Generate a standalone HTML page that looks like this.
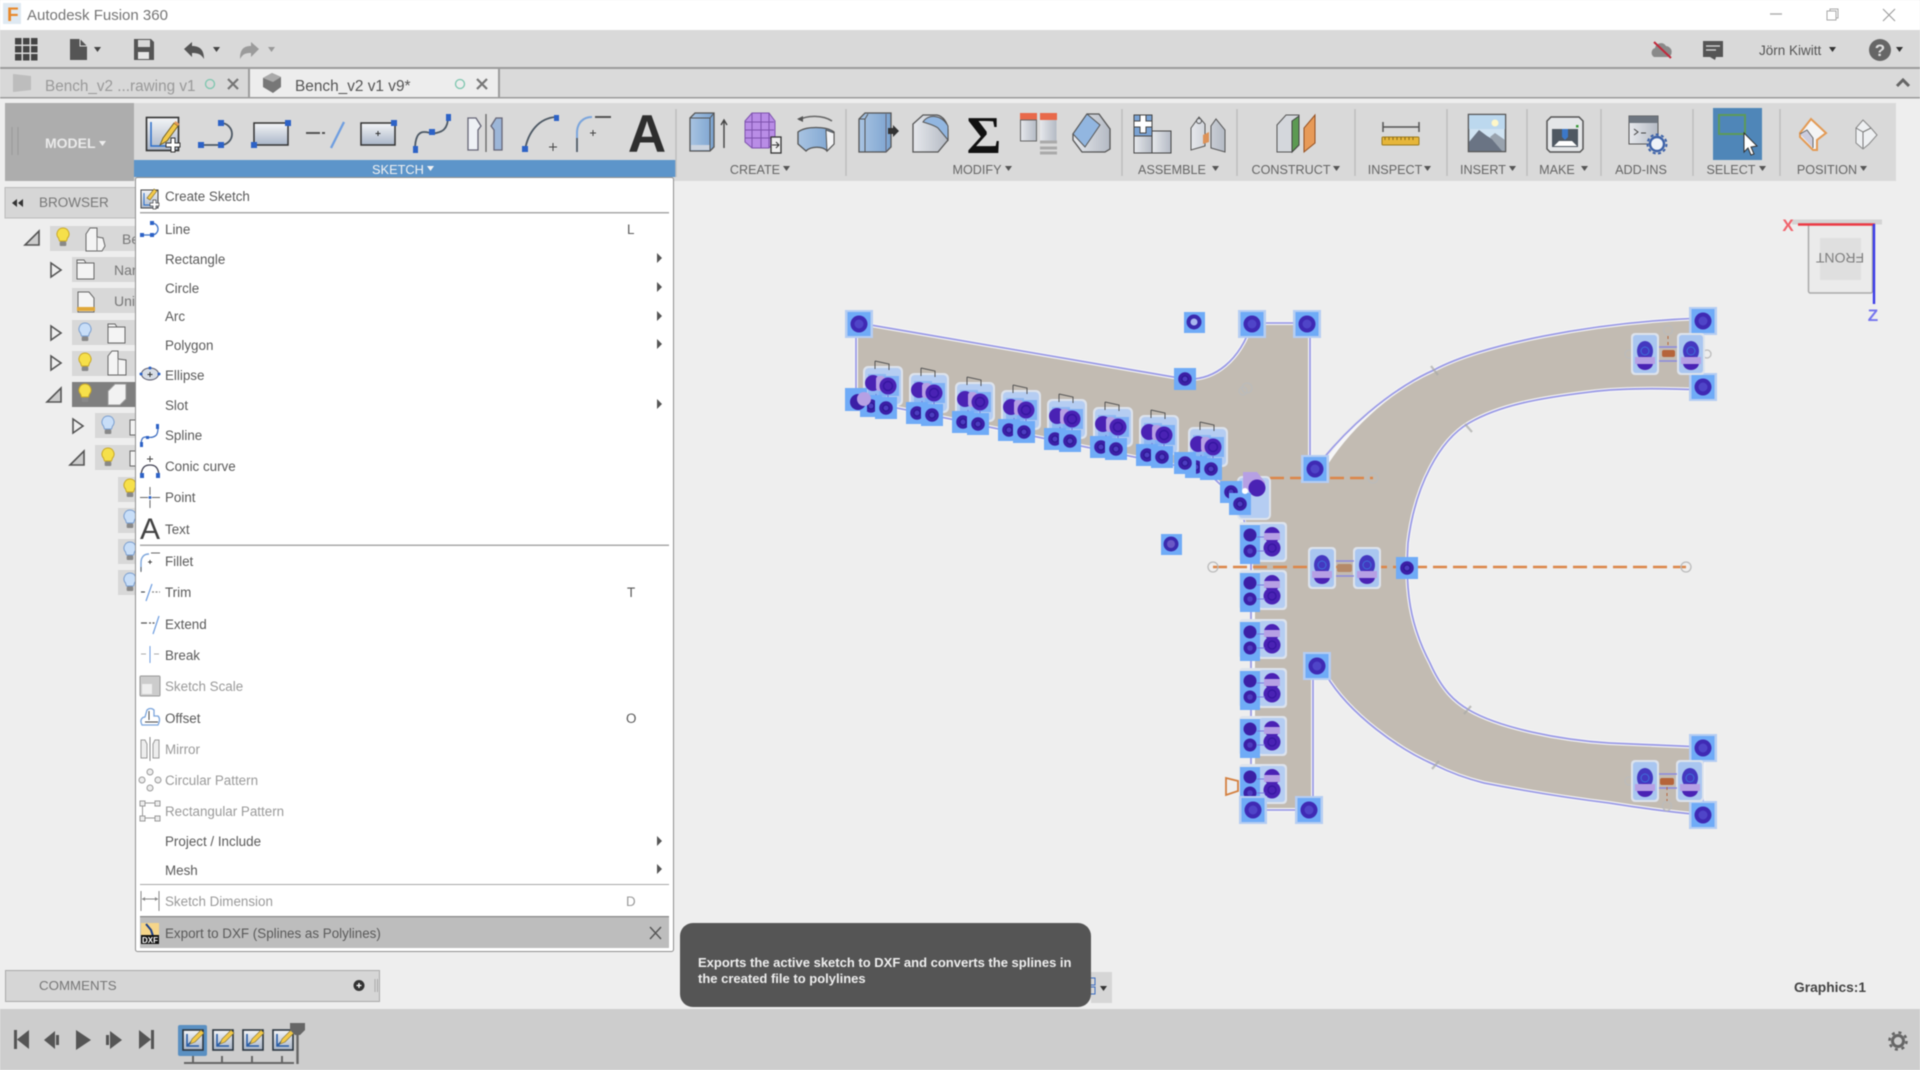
<!DOCTYPE html>
<html><head><meta charset="utf-8"><title>Autodesk Fusion 360</title>
<style>
html,body{margin:0;padding:0;width:1920px;height:1070px;overflow:hidden;background:#eee}
svg{display:block;filter:blur(.55px)}
text{font-family:"Liberation Sans",Arial,sans-serif}
.m{font-size:13.4px;fill:#5a5a5a}
.d{font-size:13.4px;fill:#9a9a9a}
.l{font-size:12.6px;fill:#666}
.ar{fill:#555}
</style></head><body>
<svg width="1920" height="1070" viewBox="0 0 1920 1070" xmlns="http://www.w3.org/2000/svg">
<defs>
<linearGradient id="gp" x1="0" y1="0" x2="0" y2="1"><stop offset="0" stop-color="#f4f5f7"/><stop offset="1" stop-color="#aab6c8"/></linearGradient>
<linearGradient id="gb" x1="0" y1="0" x2="1" y2="0"><stop offset="0" stop-color="#a9c4e2"/><stop offset="1" stop-color="#7ba3d0"/></linearGradient>
<linearGradient id="gs" x1="0" y1="0" x2="1" y2="0"><stop offset="0" stop-color="#e6e8ec"/><stop offset="1" stop-color="#b4bac4"/></linearGradient>
<g id="sq"><rect x="-11" y="-11" width="22" height="22" fill="#6fabf7"/><circle r="6.800" fill="#3b1fa6"/><circle r="3" fill="#4d3dc0" stroke="#2a1790" stroke-width="1"/></g>
<g id="cn"><rect x="-14" y="-14" width="28" height="28" fill="#b5cdf2"/><rect x="-11.500" y="-12" width="23" height="24" fill="#6fabf7"/><circle r="8.500" fill="#3f2ab4"/><circle r="4.500" fill="#4f45c8"/></g>
<g id="g1">
<rect x="-25" y="-20" width="40" height="40" rx="5" fill="#dde3ec"/>
<rect x="-23" y="-18" width="36" height="36" rx="4" fill="#b5cdf2"/>
<rect x="-20" y="-12" width="18" height="24" fill="#8fb8f2"/>
<rect x="-9" y="-10" width="20" height="20" fill="#7fb0f4"/>
<path d="M-13-25l14 3v6M-13-25v8" fill="none" stroke="#555" stroke-width="1"/>
<circle cx="-15" cy="-3" r="8" fill="#4a22b4"/>
<rect x="-12" y="-10" width="9" height="15" rx="3" fill="#b6a0e4"/>
<circle r="8.500" fill="#4a22b4"/><circle r="4.500" fill="none" stroke="#3516a0" stroke-width="1.400"/>
<path d="M-12 8v12M0 8v14" stroke="#6f6fd8" stroke-width="1"/>
<use href="#sq" x="-17" y="20"/><use href="#sq" x="-2" y="22"/>
</g>
<g id="g2">
<rect x="-11" y="-14" width="48" height="40" rx="4" fill="#dde3ec"/>
<rect x="9" y="-12" width="26" height="36" rx="3" fill="#b5cdf2"/>
<rect x="-10" y="-11" width="20" height="19" fill="#6fabf7"/><rect x="-10" y="6" width="20" height="22" fill="#6fabf7"/>
<circle cy="-1" r="6.500" fill="#3b1fa6"/><circle cy="15" r="6.500" fill="#3b1fa6"/><circle cy="15" r="2.800" fill="#4d3dc0"/>
<circle cx="22" cy="-1" r="8" fill="#4a22b4"/><circle cx="22" cy="12" r="8.500" fill="#4a22b4"/><rect x="14" y="-3" width="16" height="7" fill="#b6a0e4"/><circle cx="22" cy="12" r="4" fill="none" stroke="#3516a0" stroke-width="1.200"/>
<path d="M7 1H14M7 15h8" stroke="#7a7ae0"/>
</g>
<g id="g3">
<rect x="-14" y="-21" width="28" height="42" rx="4" fill="#dde3ec"/>
<rect x="-12" y="-19" width="24" height="38" rx="3" fill="#a9c6f0"/>
<ellipse cy="-3" rx="8" ry="10" fill="#4438c0"/><ellipse cy="9" rx="8" ry="7" fill="#4a22b4"/><rect x="-10" y="3" width="20" height="7" fill="#b6a0e4"/><circle cy="-3" r="4" fill="none" stroke="#3f6fd8"/>
</g>
<g id="bulby"><path d="M0-10a6 6 0 0 1 4.500 10l-1 3h-7l-1-3A6 6 0 0 1 0-10z" fill="#f6e04a" stroke="#c9a828"/><rect x="-3.300" y="3.500" width="6.600" height="4.500" rx="1" fill="#888"/></g>
<g id="bulbb"><path d="M0-10a6 6 0 0 1 4.500 10l-1 3h-7l-1-3A6 6 0 0 1 0-10z" fill="#c8def8" stroke="#7b9fd0"/><rect x="-3.300" y="3.500" width="6.600" height="4.500" rx="1" fill="#888"/></g>
<path id="tc" d="M0-7l10 7-10 7z" fill="none" stroke="#555" stroke-width="1.600"/>
<path id="te" d="M12-7v14H-2z" fill="#ccc" stroke="#555" stroke-width="1.600"/>
<path id="sa" d="M0-5l5 5-5 5z" fill="#555"/>
<path id="da" d="M0 0h7l-3.500 5z"/>
<g id="pen"><path d="M0 15L3 8 14-7l4 3L7 11z" fill="#f2c94a" stroke="#6a5a20" stroke-width=".9"/><path d="M14-7l4 3 1.500-2-4-3z" fill="#e59a5a"/></g>
<g id="tl"><rect width="20" height="20" fill="url(#gp)" stroke="#2c3640" stroke-width="1.600"/><path d="M4 4v12h12M4 16l8-8" fill="none" stroke="#2a5ea8" stroke-width="1.600"/><path d="M7 14l2-5 9-9 3 3-9 9z" fill="#f2c94a" stroke="#7a6a30" stroke-width=".6"/></g>
</defs>

<rect width="1920" height="1070" fill="#eeeeee"/>
<!-- title bar -->
<rect width="1920" height="30" fill="#fff"/>
<rect x="3" y="3" width="18" height="21" fill="#dfe9f2"/>
<text x="7" y="21" font-size="19" font-weight="bold" fill="#e8892c">F</text>
<text x="27" y="20" font-size="15" fill="#757575">Autodesk Fusion 360</text>
<path d="M1770 14h12" stroke="#b0b0b0" stroke-width="1.500"/>
<rect x="1830" y="9" width="8" height="9" fill="#fff" stroke="#a8a8a8"/><rect x="1827" y="11" width="9" height="9" fill="#fff" stroke="#a8a8a8"/>
<path d="M1883 9l12 12M1895 9l-12 12" stroke="#999" stroke-width="1"/>

<!-- quick bar -->
<rect y="30" width="1920" height="37" fill="#d9d9d9"/>
<rect y="67" width="1920" height="2" fill="#9c9c9c"/>
<g fill="#444"><rect x="15" y="38" width="6.500" height="6.500"/><rect x="23" y="38" width="6.500" height="6.500"/><rect x="31" y="38" width="6.500" height="6.500"/><rect x="15" y="46" width="6.500" height="6.500"/><rect x="23" y="46" width="6.500" height="6.500"/><rect x="31" y="46" width="6.500" height="6.500"/><rect x="15" y="54" width="6.500" height="6.500"/><rect x="23" y="54" width="6.500" height="6.500"/><rect x="31" y="54" width="6.500" height="6.500"/></g>
<path d="M70 39h10l7 7v14H70z" fill="#555"/><path d="M80 39v7h7" fill="none" stroke="#ddd"/>
<use href="#da" x="94" y="47" fill="#444"/>
<path d="M134 39h17l3 3v18h-20z" fill="#555"/><rect x="138" y="40" width="12" height="7" fill="#d9d9d9"/><rect x="138" y="52" width="11" height="7" fill="#e6e6e6"/>
<path d="M184 49l8-7v4c7 0 12 3 12 13-3-5-6-6-12-6v4z" fill="#555"/><use href="#da" x="213" y="47" fill="#444"/>
<path d="M259 49l-8-7v4c-7 0-11 3-11 13 3-5 5-6 11-6v4z" fill="#9b9b9b"/><use href="#da" x="268" y="47" fill="#999"/>
<path d="M1654 57a5 5 0 0 1 1-9 6 6 0 0 1 11-2 6 6 0 0 1 3 11z" fill="#8a8a8a"/><path d="M1654 42l17 16" stroke="#c2283a" stroke-width="2"/>
<path d="M1703 41h20v16h-7l-1 3-5-3h-7z" fill="#555"/><path d="M1706 46h14M1706 50h10" stroke="#ddd" stroke-width="1.200"/>
<text x="1759" y="55" font-size="13.500" fill="#555">Jörn Kiwitt</text><use href="#da" x="1829" y="47" fill="#333"/>
<circle cx="1880" cy="50" r="11" fill="#666"/><text x="1880" y="56" text-anchor="middle" font-size="17" font-weight="bold" fill="#ddd">?</text><use href="#da" x="1896" y="47" fill="#333"/>

<!-- tabs -->
<rect y="69" width="1920" height="28" fill="#dadada"/>
<rect y="97" width="1920" height="1.500" fill="#9c9c9c"/>
<rect x="0" y="69" width="248" height="28" fill="#d8d8d8"/>
<rect x="248" y="69" width="2" height="28" fill="#9c9c9c"/>
<rect x="250" y="69" width="248" height="28" fill="#ededed"/>
<rect x="498" y="69" width="2" height="28" fill="#9c9c9c"/>
<path d="M13 74l18 2v14l-18 2z" fill="#bdbdbd"/>
<text x="45" y="91" font-size="15.300" fill="#999">Bench_v2 ...rawing v1</text>
<circle cx="210" cy="84" r="4.500" fill="none" stroke="#7cc6ae" stroke-width="1.300"/>
<path d="M228 79l10 10M238 79l-10 10" stroke="#777" stroke-width="2.200"/>
<path d="M263 78l9-5 9 4v10l-8 6-10-6z" fill="#777"/><path d="M263 78l10 4 8-5-9-4z" fill="#aaa"/>
<text x="295" y="91" font-size="15.400" fill="#555">Bench_v2 v1 v9*</text>
<circle cx="460" cy="84" r="4.500" fill="none" stroke="#7cc6ae" stroke-width="1.300"/>
<path d="M477 79l10 10M487 79l-10 10" stroke="#777" stroke-width="2.200"/>
<path d="M1897 86l6-6 6 6" fill="none" stroke="#666" stroke-width="3"/>

<!-- toolbar -->
<rect x="5" y="103" width="1891" height="78" fill="#d9d9d9"/>
<rect x="5" y="103" width="129" height="78" fill="#adadad"/>
<path d="M12 127v28M18 127v28" stroke="#999"/>
<text x="45" y="148" font-size="14" font-weight="bold" fill="#eaeaea">MODEL</text><use href="#da" x="99" y="141" fill="#eee"/>
<rect x="134" y="160" width="542" height="17" fill="#5d95ca"/>
<text x="372" y="174" font-size="12.800" fill="#f2f2f2">SKETCH</text><use href="#da" x="427" y="166" fill="#f2f2f2"/>
<!-- sketch icons -->
<rect x="146.500" y="117.500" width="32" height="33" fill="url(#gp)" stroke="#333" stroke-width="1.600"/>
<path d="M151 122v24h22" fill="none" stroke="#2c6fcb" stroke-width="1.500"/>
<use href="#pen" x="160" y="130"/>
<path d="M171 138h4v5h5v4h-5v5h-4v-5h-5v-4h5z" fill="#fff" stroke="#333"/>
<path d="M201 145h20M221 123a11 11 0 0 1 0 22" fill="none" stroke="#4c5864" stroke-width="1.800"/>
<rect x="198" y="142" width="6" height="6" fill="#2d62c6"/><rect x="218" y="142" width="6" height="6" fill="#2d62c6"/><rect x="218" y="120" width="6" height="6" fill="#2d62c6"/>
<rect x="254" y="123" width="34" height="22" fill="url(#gp)" stroke="#333" stroke-width="1.500"/><rect x="285" y="120" width="6" height="6" fill="#2d62c6"/><rect x="251" y="142" width="6" height="6" fill="#2d62c6"/>
<path d="M306 133h14M322 133h3" stroke="#555" stroke-width="2"/><path d="M331 148l13-26" stroke="#6f9ee0" stroke-width="2.300"/>
<rect x="361" y="123" width="34" height="22" fill="url(#gp)" stroke="#333" stroke-width="1.500"/><rect x="391" y="120" width="6" height="6" fill="#2d62c6"/><path d="M378 131v5M375.500 133.500h5" stroke="#333"/>
<path d="M415 150c0-14 4-18 9-18s8 2 12 1 12-2 12-16" fill="none" stroke="#4c5864" stroke-width="1.800"/><rect x="413" y="146" width="5" height="7" fill="#2d62c6"/><rect x="429" y="129" width="6" height="6" fill="#2d62c6"/><rect x="446" y="114" width="5" height="7" fill="#2d62c6"/>
<path d="M468 118h8l5 8-3 4v20h-10z" fill="#eef1f5" stroke="#667" stroke-width="1.300"/><path d="M502 118h-6l-5 8 3 4v20h8z" fill="#9cb6d8" stroke="#667" stroke-width="1.300"/><path d="M486 114v38" stroke="#666" stroke-width="1.300"/>
<path d="M525 150c3-18 14-32 31-33" fill="none" stroke="#4c5864" stroke-width="1.800"/><rect x="522" y="146" width="6" height="6" fill="#2d62c6"/><rect x="554" y="115" width="5" height="6" fill="#2d62c6"/><path d="M553 143v8M549 147h8" stroke="#444"/>
<path d="M577 152v-19c0-10 6-16 15-16" fill="none" stroke="#7ba5dc" stroke-width="2"/><path d="M577 152v-14" stroke="#555" stroke-width="1.500"/><path d="M595 117h16" stroke="#555" stroke-width="2"/><path d="M593 130v6M590 133h6" stroke="#444"/>
<text x="647" y="152" text-anchor="middle" font-size="53" font-weight="bold" fill="#2e2e2e">A</text>
<!-- separators -->
<g stroke="#bfbfbf" stroke-width="1.500"><path d="M676 109v68M846 109v67M1122 109v67M1237 109v67M1355 109v67M1447 109v67M1527 109v67M1601 109v67M1693 109v67M1780 109v67"/></g>
<!-- create -->
<path d="M690 118l5-5h19v34l-4 4h-20z" fill="url(#gb)" stroke="#555" stroke-width="1.300"/><path d="M710 118v33M690 118h20l4-5" fill="none" stroke="#555"/><rect x="691" y="145" width="18.500" height="5" fill="#ccd4df"/><path d="M724 148v-27M721 125l3-5 3 5" fill="none" stroke="#444" stroke-width="1.400"/>
<path d="M745 121l7-8h17l6 8v21l-6 6h-17l-7-6z" fill="#b98de6" stroke="#7d52ad"/><path d="M745 122h29M745 130h29M745 138h29M752 113v35M761 113v35M769 113v35" stroke="#7d52ad"/><rect x="771" y="137" width="10" height="16" fill="#eee" stroke="#333" stroke-width="1.300"/><path d="M772 145h7M776 142l3 3-3 3" fill="none" stroke="#333"/>
<path d="M799 120c8-5 24-5 33 1" fill="none" stroke="#666" stroke-width="1.600"/><path d="M797 119l6-3v6z" fill="#555"/><path d="M798 132c8-6 28-6 36 0v12l-7 7c-4-5-16-5-21 0l-8-7z" fill="url(#gb)" stroke="#555" stroke-width="1.300"/><path d="M826 130l8 3v11l-7 7z" fill="#f2f3f5" stroke="#555"/>
<text x="755" y="174" text-anchor="middle" class="l">CREATE</text><use href="#da" x="783" y="166" fill="#555"/>
<!-- modify -->
<path d="M859 152v-33l6-6h26v34l-5 5z" fill="url(#gb)" stroke="#555" stroke-width="1.300"/><path d="M868 114l-3 5v33M859 119h6" fill="none" stroke="#555"/><path d="M886 114v38" stroke="#667"/><path d="M888 128h5v-3l6 6-6 6v-3h-5z" fill="#333"/>
<path d="M913 152v-28l10-9h14c6 1 11 8 11 15v10l-10 12z" fill="url(#gs)" stroke="#555" stroke-width="1.300"/><path d="M923 122c5-8 18-8 25 4v14l-10-12c-4-3-9-4-15-6z" fill="#92b6e0" stroke="#555"/>
<text x="984" y="153" text-anchor="middle" font-size="53" font-weight="bold" fill="#111" style="font-family:'Liberation Serif',serif">Σ</text>
<rect x="1020" y="113" width="17" height="7" fill="#e8694a"/><rect x="1040" y="113" width="17" height="7" fill="#e8694a"/><rect x="1020.500" y="120" width="16" height="21" fill="url(#gs)" stroke="#666"/><rect x="1040" y="120" width="16.500" height="22" fill="url(#gs)"/><path d="M1040 142h17M1040 148h17M1040 153h17" stroke="#aaa" stroke-width="3"/>
<path d="M1073 134l14-20h12l11 15v20l-5 3h-23l-9-12z" fill="url(#gs)" stroke="#555" stroke-width="1.300"/><path d="M1073 134l14-20 13 11-15 22z" fill="#92b6e0" stroke="#555"/>
<text x="977" y="174" text-anchor="middle" class="l">MODIFY</text><use href="#da" x="1005" y="166" fill="#555"/>
<!-- assemble -->
<rect x="1134" y="115" width="18" height="21" fill="#7ba3d4" stroke="#444"/><rect x="1134" y="136" width="18" height="17" fill="url(#gs)" stroke="#444"/><rect x="1152" y="131" width="19" height="22" fill="url(#gs)" stroke="#444"/><path d="M1140 115h6v6h6v6h-6v6h-6v-6h-6v-6h6z" fill="#fff" stroke="#444"/>
<path d="M1191 150v-22l8-11 6 7v22zM1225 152v-22l-9-11-5 7v22z" fill="url(#gs)" stroke="#555"/><path d="M1203 135l6-3v10l-6 2z" fill="#dd9258"/><circle cx="1199" cy="121" r="2.500" fill="none" stroke="#555"/>
<text x="1172" y="174" text-anchor="middle" class="l">ASSEMBLE</text><use href="#da" x="1212" y="166" fill="#555"/>
<!-- construct -->
<path d="M1277 152v-27l9-10h13v30l-7 7z" fill="#d4d7dc" stroke="#555"/><path d="M1292 121l7-5v29l-7 7z" fill="#5c9a52" stroke="#444"/><path d="M1304 152v-24l11-13v28z" fill="#e79a58" stroke="#944f20"/>
<text x="1291" y="174" text-anchor="middle" class="l">CONSTRUCT</text><use href="#da" x="1333" y="166" fill="#555"/>
<!-- inspect -->
<path d="M1383 127h36M1383 122v10M1419 122v10" stroke="#555" stroke-width="1.500"/><rect x="1382" y="137" width="37" height="8" rx="1" fill="#e6b63a" stroke="#9a7a20"/><path d="M1385 137v3M1389 137v3M1393 137v3M1397 137v3M1401 137v3M1405 137v3M1409 137v3M1413 137v3" stroke="#8a6a18"/>
<text x="1395" y="174" text-anchor="middle" class="l">INSPECT</text><use href="#da" x="1424" y="166" fill="#555"/>
<!-- insert -->
<rect x="1468.500" y="114.500" width="37" height="37" fill="#cfe3f2" stroke="#555" stroke-width="1.500"/><rect x="1469" y="115" width="36" height="14" fill="#bcd8ee"/><circle cx="1495" cy="123" r="3.500" fill="#fff7c8"/><path d="M1469 151v-9l10-12 8 6 5 3 8 6 5 6z" fill="#6a7484"/><path d="M1490 137l5-4 10 7v11h-3z" fill="#99a3ae"/>
<text x="1483" y="174" text-anchor="middle" class="l">INSERT</text><use href="#da" x="1509" y="166" fill="#555"/>
<!-- make -->
<path d="M1547 121l4-4h28l4 4v28l-3 3h-30l-3-3z" fill="#e4e6e8" stroke="#555" stroke-width="1.500"/><rect x="1552" y="129" width="26" height="18" fill="#4f5862"/><path d="M1554 146l5-5h13l5 5z" fill="#fff"/><path d="M1562 129h6v8l-3 3-3-3z" fill="#3c78c8"/><rect x="1576" y="125" width="2.500" height="2.500" fill="#3a9a3a"/>
<text x="1557" y="174" text-anchor="middle" class="l">MAKE</text><use href="#da" x="1581" y="166" fill="#555"/>
<!-- addins -->
<rect x="1629" y="116" width="29" height="28" fill="url(#gs)" stroke="#555"/><rect x="1629" y="116" width="29" height="7" fill="#6e7680"/><path d="M1634 129l4 3-4 3M1641 133h5" fill="none" stroke="#444"/>
<circle cx="1657" cy="144" r="7" fill="#eef2f8" stroke="#3d62a8" stroke-width="2.400"/><circle cx="1657" cy="144" r="9.500" fill="none" stroke="#3d62a8" stroke-width="2" stroke-dasharray="3 2.400"/>
<text x="1641" y="174" text-anchor="middle" class="l">ADD-INS</text>
<!-- select -->
<rect x="1713" y="108" width="49" height="52" fill="#4f86b8"/>
<rect x="1719" y="115" width="26" height="19" fill="none" stroke="#5d9a58" stroke-width="2"/>
<path d="M1744 133v19l4-4 3 7 3-1-3-7 6-1z" fill="#fff" stroke="#333"/>
<text x="1731" y="174" text-anchor="middle" class="l">SELECT</text><use href="#da" x="1759" y="166" fill="#555"/>
<!-- position -->
<path d="M1811 119l15 14-9 7v10l-4 0-13-13v-4z" fill="#f4f4f4" stroke="#e39a54" stroke-width="2"/><path d="M1800 134l7-4 6 8v10" fill="#ccd" stroke="#666"/>
<path d="M1863 120l8 8 6 7-8 9-6 5-7-6v-15z" fill="#eef0f2" stroke="#888"/><path d="M1856 128l7 4v16M1863 132l8-4" stroke="#777" fill="none"/>
<text x="1827" y="174" text-anchor="middle" class="l">POSITION</text><use href="#da" x="1860" y="166" fill="#555"/>

<!-- browser -->
<rect x="5" y="187.500" width="131" height="30.500" fill="#d6d6d6" stroke="#bbb"/>
<path d="M12 203l5-4v8zM18 203l5-4v8z" fill="#333"/>
<text x="39" y="207" font-size="13.500" fill="#777">BROWSER</text>
<g fill="#d8d8d8"><rect x="50" y="226" width="90" height="25"/><rect x="72" y="257" width="68" height="25"/><rect x="72" y="288" width="68" height="25"/><rect x="72" y="320" width="68" height="25"/><rect x="72" y="351" width="68" height="25"/><rect x="95" y="413" width="40" height="25"/><rect x="95" y="445" width="40" height="25"/><rect x="118" y="477" width="20" height="25"/><rect x="118" y="508" width="20" height="25"/><rect x="118" y="539" width="20" height="25"/><rect x="118" y="570" width="20" height="25"/></g>
<rect x="72" y="382" width="68" height="25" fill="#7f7f7f"/>
<use href="#te" x="27" y="238"/><use href="#tc" x="51" y="270"/><use href="#tc" x="51" y="333"/><use href="#tc" x="51" y="363"/><use href="#te" x="49" y="395"/><use href="#tc" x="73" y="426"/><use href="#te" x="72" y="458"/>
<use href="#bulby" x="63" y="238"/><use href="#bulbb" x="85" y="333"/><use href="#bulby" x="85" y="363"/><use href="#bulby" x="85" y="394"/><use href="#bulbb" x="108" y="426"/><use href="#bulby" x="108" y="458"/><use href="#bulby" x="130" y="489"/><use href="#bulbb" x="130" y="520"/><use href="#bulbb" x="130" y="552"/><use href="#bulbb" x="130" y="583"/>
<path d="M86 234l4-6h7v9l6 1 2 8-3 5H86z" fill="#f4f4f4" stroke="#666"/><path d="M97 237v14" stroke="#888"/>
<path d="M77 263h17v16H77zM77 263v-3h7l2 3" fill="#f4f4f4" stroke="#666"/>
<text x="114" y="275" font-size="14" fill="#777">Nar</text>
<path d="M78 292h11l5 6v14H78z" fill="#f4f4f4" stroke="#666"/><rect x="77" y="307" width="18" height="4" fill="#e0a83a"/>
<text x="114" y="306" font-size="14" fill="#777">Uni</text>
<text x="122" y="244" font-size="14" fill="#777">Be</text>
<path d="M108 327h17v16h-17zM108 327v-3h7l2 3" fill="#f4f4f4" stroke="#666"/>
<path d="M108 356l4-5h6v8l8 1v15h-18z" fill="#f4f4f4" stroke="#666"/><path d="M118 359v16" stroke="#888"/>
<path d="M108 391l7-7h11v15l-6 6h-12z" fill="#f2f2f2" stroke="#999"/>
<rect x="130" y="420" width="8" height="15" fill="#f4f4f4" stroke="#666"/><rect x="130" y="451" width="8" height="15" fill="#f4f4f4" stroke="#666"/>

<!-- sketch geometry -->
<path d="M856 323H859L1185 379C1215 381 1240 360 1252 323H1310V470H1322C1345 432 1385 392 1434 370 1480 345 1590 322 1703 318V390C1660 388 1620 388 1590 392 1540 398 1500 405 1469 423 1440 440 1415 485 1408 543 1405 590 1410 625 1430 663 1442 690 1455 702 1469 710 1500 728 1560 740 1609 743L1703 747V815C1670 812 1640 808 1609 803 1560 797 1520 790 1484 783 1460 777 1445 770 1435 765 1400 750 1350 715 1326 675L1313 666V810H1253V590L1250 550 1240 503 1207 472 897 408 856 400Z" fill="#c2bbb2" stroke="#f6f6f6" stroke-width="4"/>
<path d="M856 400V323H859L1185 379C1215 381 1240 360 1252 323H1307M1310 323V470M1322 460C1345 432 1385 392 1434 370 1480 345 1590 322 1703 318V387M1703 390C1660 388 1620 388 1590 392 1540 398 1500 405 1469 423 1440 440 1415 485 1408 543 1405 590 1410 625 1430 663 1442 690 1455 702 1469 710 1500 728 1560 740 1609 743L1703 747V815C1670 812 1640 808 1609 803 1560 797 1520 790 1484 783 1460 777 1445 770 1435 765 1400 750 1350 715 1326 675M1313 670V810H1253M1251 810V550L1240 503 1207 472 897 408" fill="none" stroke="#9b9be6" stroke-width="1.800"/>
<!-- centre lines -->
<path d="M1270 478h103M1213 567h473" stroke="#dc8648" stroke-width="2.400" stroke-dasharray="14 6"/>
<g fill="none" stroke="#bbb" stroke-width="1.300"><circle cx="1373" cy="478" r="5"/><circle cx="1213" cy="567" r="5"/><circle cx="1686" cy="567" r="5"/><circle cx="1247" cy="388" r="5"/><circle cx="1243" cy="391" r="4"/><circle cx="1668" cy="330" r="4.500"/><circle cx="1629" cy="354" r="4"/><circle cx="1707" cy="354" r="4"/><circle cx="1667" cy="806" r="4.500"/><circle cx="1629" cy="781" r="4"/></g>
<!-- left row groups -->
<use href="#g1" x="888" y="386"/><use href="#g1" x="934" y="393"/><use href="#g1" x="980" y="402"/><use href="#g1" x="1026" y="410"/><use href="#g1" x="1072" y="419"/><use href="#g1" x="1118" y="427"/><use href="#g1" x="1164" y="435"/><use href="#g1" x="1213" y="447"/>
<rect x="845" y="388" width="22" height="23" fill="#6fabf7"/><circle cx="858" cy="402" r="8" fill="#3b1fa6"/><circle cx="864" cy="399" r="7" fill="#b6a0e4"/>
<use href="#sq" x="1185" y="463"/>
<!-- corner group -->
<rect x="1238" y="477" width="32" height="42" rx="4" fill="#b5cdf2" stroke="#dde3ec" stroke-width="2"/>
<path d="M1243 472h14l8 10v8h-22z" fill="#b6a0e4"/><circle cx="1257" cy="488" r="8.500" fill="#4a22b4"/>
<use href="#sq" x="1231" y="492"/><use href="#sq" x="1240" y="504"/><circle cx="1245" cy="491" r="3" fill="#fff"/>
<!-- left vertical groups -->
<use href="#g2" x="1250" y="536"/><use href="#g2" x="1250" y="584"/><use href="#g2" x="1250" y="633"/><use href="#g2" x="1250" y="682"/><use href="#g2" x="1250" y="730"/><use href="#g2" x="1250" y="778"/>
<path d="M1226 778l12 3v10l-12 4z" fill="none" stroke="#d48040" stroke-width="1.800"/>
<!-- floaters -->
<use href="#cn" x="859" y="324"/>
<rect x="1184" y="312" width="21" height="21" fill="#6fabf7"/><circle cx="1194" cy="322" r="7.500" fill="#3b2aae"/><circle cx="1194" cy="322" r="3.500" fill="#a9b8f0"/>
<rect x="1161" y="534" width="21" height="21" fill="#6fabf7"/><circle cx="1171" cy="544" r="7.500" fill="#3b2aae"/><circle cx="1171" cy="544" r="4" fill="#6a58c6"/>
<use href="#sq" x="1185" y="379"/>
<use href="#cn" x="1252" y="324"/><use href="#cn" x="1307" y="324"/><use href="#cn" x="1315" y="469"/>
<use href="#cn" x="1703" y="321"/><use href="#cn" x="1703" y="387"/><use href="#cn" x="1703" y="748"/><use href="#cn" x="1703" y="815"/>
<use href="#cn" x="1317" y="666"/><use href="#cn" x="1309" y="810"/><use href="#cn" x="1253" y="810"/>
<!-- H groups -->
<use href="#g3" x="1322" y="568"/><use href="#g3" x="1367" y="568"/><path d="M1336 561h18M1336 576h18" stroke="#8a8ae0" stroke-width="1.500"/><rect x="1337" y="564" width="15" height="8" rx="2" fill="#b58a6a"/>
<use href="#sq" x="1407" y="568"/>
<use href="#g3" x="1645" y="354"/><use href="#g3" x="1691" y="354"/><path d="M1659 347h18M1659 361h18" stroke="#8a8ae0" stroke-width="1.500"/><rect x="1662" y="350" width="13" height="7" rx="2" fill="#b5643a"/><path d="M1668 336v12" stroke="#b5643a" stroke-dasharray="3 3"/>
<use href="#g3" x="1645" y="781"/><use href="#g3" x="1690" y="781"/><path d="M1659 774h18M1659 788h18" stroke="#8a8ae0" stroke-width="1.500"/><rect x="1660" y="778" width="14" height="7" rx="2" fill="#b5643a"/><path d="M1667 787v14" stroke="#b5643a" stroke-dasharray="3 3"/>
<!-- tick marks on curves -->
<g stroke="#a9aaa8" stroke-width="2.200" opacity=".7"><path d="M1431 366l7 9M1465 424l7 8M1464 714l7-8M1432 769l7-8"/></g>

<!-- view cube -->
<path d="M1792 222h90" stroke="#bbb" stroke-width="5" opacity=".5"/>
<rect x="1808.500" y="224" width="64" height="69" rx="2" fill="#ebebeb" stroke="#aaa" stroke-width="1.500"/>
<rect x="1820" y="238" width="41" height="42" fill="#dfdfdf"/>
<text x="0" y="0" text-anchor="middle" font-size="14" fill="#7d7d7d" transform="translate(1840 253) rotate(180)">FRONT</text>
<path d="M1798 224.500h77" stroke="#ec3a44" stroke-width="2.400"/><path d="M1874 224v80" stroke="#3a3ae8" stroke-width="2.400"/>
<text x="1788" y="231" text-anchor="middle" font-size="17" fill="#f0636c" font-weight="bold">X</text>
<text x="1873" y="321" text-anchor="middle" font-size="17" fill="#7474ee" font-weight="bold">Z</text>

<!-- sketch menu -->
<rect x="135.500" y="177.500" width="538" height="774" rx="2" fill="#fff" stroke="#8f8f8f"/>
<g fill="#a8a8a8"><rect x="140" y="212" width="529" height="1.500"/><rect x="140" y="544.500" width="529" height="1.500"/><rect x="140" y="884" width="529" height="1"/></g>
<rect x="140" y="917" width="529" height="31" fill="#bdbdbd"/><rect x="140" y="916" width="529" height="1.200" fill="#888"/>
<text class="m" x="165" y="201">Create Sketch</text>
<text class="m" x="165" y="234">Line</text><text class="m" x="627" y="234">L</text>
<text class="m" x="165" y="264">Rectangle</text><text class="m" x="165" y="293">Circle</text><text class="m" x="165" y="321">Arc</text><text class="m" x="165" y="350">Polygon</text>
<text class="m" x="165" y="380">Ellipse</text><text class="m" x="165" y="410">Slot</text><text class="m" x="165" y="440">Spline</text><text class="m" x="165" y="471">Conic curve</text><text class="m" x="165" y="502">Point</text><text class="m" x="165" y="534">Text</text>
<text class="m" x="165" y="566">Fillet</text><text class="m" x="165" y="597">Trim</text><text class="m" x="627" y="597">T</text><text class="m" x="165" y="629">Extend</text><text class="m" x="165" y="660">Break</text>
<text class="d" x="165" y="691">Sketch Scale</text><text class="m" x="165" y="723">Offset</text><text class="m" x="626" y="723">O</text><text class="d" x="165" y="754">Mirror</text><text class="d" x="165" y="785">Circular Pattern</text><text class="d" x="165" y="816">Rectangular Pattern</text>
<text class="m" x="165" y="846">Project / Include</text><text class="m" x="165" y="875">Mesh</text>
<text class="d" x="165" y="906">Sketch Dimension</text><text class="d" x="626" y="906">D</text>
<text class="m" x="165" y="938">Export to DXF (Splines as Polylines)</text>
<path d="M650 927l11 12M661 927l-11 12" stroke="#555" stroke-width="1.400"/>
<g class="ar"><use href="#sa" x="657" y="258"/><use href="#sa" x="657" y="287"/><use href="#sa" x="657" y="316"/><use href="#sa" x="657" y="344"/><use href="#sa" x="657" y="404"/><use href="#sa" x="657" y="841"/><use href="#sa" x="657" y="869"/></g>
<!-- menu icons -->
<rect x="141" y="190" width="17" height="18" fill="url(#gp)" stroke="#444"/><path d="M144 193v12h10" fill="none" stroke="#2c6fcb"/><path d="M147 198l7-9 3 2-7 9z" fill="#f2c94a" stroke="#6a5a20" stroke-width=".6"/><path d="M153 200h3v3h3v3h-3v3h-3v-3h-3v-3h3z" fill="#fff" stroke="#444" stroke-width=".7"/>
<path d="M142 235h10M152 223a6 6 0 0 1 0 12" fill="none" stroke="#3a70c8" stroke-width="1.300"/><rect x="140" y="233" width="4" height="4" fill="#2d62c6"/><rect x="150" y="233" width="4" height="4" fill="#2d62c6"/><rect x="150" y="221" width="4" height="4" fill="#2d62c6"/>
<ellipse cx="150" cy="374" rx="8.500" ry="6" fill="#d7dde6" stroke="#556"/><path d="M150 372v5M147.500 374.500h5" stroke="#333"/><circle cx="150" cy="368" r="1.500" fill="#2d62c6"/><circle cx="141" cy="374" r="1.500" fill="#2d62c6"/><circle cx="159" cy="374" r="1.500" fill="#2d62c6"/>
<path d="M141 446c0-8 2-9 5-9s4 1 7 0 5-2 5-10" fill="none" stroke="#3a6bc0" stroke-width="1.200"/><rect x="140" y="442" width="3" height="5" fill="#2d62c6"/><rect x="146" y="436" width="3" height="3" fill="#2d62c6"/><rect x="156" y="424" width="3" height="5" fill="#2d62c6"/>
<path d="M141 475c1-8 4-10 9-10s8 2 9 10" fill="none" stroke="#445" stroke-width="1.300"/><rect x="140" y="473" width="4" height="5" fill="#2d62c6"/><rect x="156" y="473" width="4" height="5" fill="#2d62c6"/><path d="M150 456v6M147 459h6" stroke="#444"/>
<path d="M150 487v8M150 500v8M140 497.500h8M152 497.500h8" stroke="#666"/><circle cx="150" cy="497.500" r="1.500" fill="#2d62c6"/>
<text x="150" y="539" text-anchor="middle" font-size="30" fill="#444">A</text>
<path d="M141 571v-8c0-6 3-9 8-9" fill="none" stroke="#7ba5dc" stroke-width="1.400"/><path d="M151 553h9M141 572v-5" stroke="#666"/><path d="M150 560v4M148 562h4" stroke="#444"/>
<path d="M141 592h3M146 601l6-17" stroke="#6f9ee0" stroke-width="1.200"/><path d="M152 592h8" stroke="#888" stroke-width="1.200" stroke-dasharray="2 1.500"/><path d="M141 592h4" stroke="#444"/>
<path d="M141 623h6M149 623h2M152.500 623h2" stroke="#555" stroke-width="1.200"/><path d="M153 634l6-18" stroke="#6f9ee0" stroke-width="1.200"/>
<path d="M150 646v17" stroke="#6f9ee0"/><path d="M141 654h5M154 654h5" stroke="#aaa"/>
<rect x="140" y="676" width="20" height="20" rx="1" fill="#ccc" stroke="#999"/><rect x="142" y="684" width="10" height="10" fill="#eee"/>
<path d="M142 725c-3-6 1-8 3-8l2-7c2-2 5-2 7 0v6h4c2 2 2 5 0 9z" fill="#fff" stroke="#7ba5dc" stroke-width="1.300"/><path d="M145 722h13M149 711v9" stroke="#444"/>
<path d="M141 740h4l2 4v14h-6zM159 740h-4l-2 4v14h6z" fill="#eee" stroke="#999"/><path d="M150 737v24" stroke="#888"/>
<g fill="#eee" stroke="#999"><circle cx="150" cy="772" r="3"/><circle cx="150" cy="788" r="3"/><circle cx="142" cy="780" r="3"/><circle cx="158" cy="780" r="3"/><rect x="140" y="801" width="5" height="5"/><rect x="155" y="801" width="5" height="5"/><rect x="140" y="816" width="5" height="5"/><rect x="155" y="816" width="5" height="5"/></g><path d="M145 803h10M145 818h10M142.500 806v10" stroke="#999"/>
<path d="M141 891v20M159 891v20M142 899h16" stroke="#888"/><path d="M142 899l3-2v4zM158 899l-3-2v4z" fill="#888"/>
<rect x="141" y="923" width="18" height="21" fill="#f5d58a"/><path d="M146 924l5 6 2 6" fill="none" stroke="#1a3e8a" stroke-width="2"/><rect x="141" y="935" width="18" height="9" fill="#111"/><text x="150" y="943" text-anchor="middle" font-size="8" font-weight="bold" fill="#fff">DXF</text>

<!-- bottom -->
<rect x="1091" y="972" width="21" height="31" fill="#d6d6d6"/><rect x="1089" y="978" width="6" height="7" fill="none" stroke="#3a6bc0"/><rect x="1089" y="987" width="6" height="7" fill="none" stroke="#3a6bc0"/><use href="#da" x="1100" y="986" fill="#333"/>
<rect x="680" y="923" width="411" height="84" rx="13" fill="#555"/>
<text x="698" y="967" font-size="13" font-weight="bold" fill="#eeeeee">Exports the active sketch to DXF and converts the splines in</text>
<text x="698" y="983" font-size="13" font-weight="bold" fill="#eeeeee">the created file to polylines</text>
<text x="1794" y="992" font-size="13.800" font-weight="bold" fill="#444">Graphics:1</text>
<rect x="5.500" y="970.500" width="374" height="31" fill="#d6d6d6" stroke="#aaa"/>
<text x="39" y="990" font-size="13.300" fill="#777">COMMENTS</text>
<circle cx="359" cy="985.500" r="5.500" fill="#333"/><path d="M359 983v5M356.500 985.500h5" stroke="#fff" stroke-width="1.300"/>
<path d="M375 979v13M377.500 979v13" stroke="#aaa"/>
<rect y="1009" width="1920" height="61" fill="#cdcdcd"/>
<g fill="#555"><rect x="14" y="1030" width="3" height="19"/><path d="M29 1030v19l-12-9.500z"/><path d="M44 1040l11-9v18z"/><rect x="56" y="1035" width="3" height="10"/><path d="M76 1030l15 10-15 10z"/><rect x="106" y="1035" width="3" height="10"/><path d="M110 1031l12 9-12 9z"/><path d="M139 1030l12 9.500-12 9.500z"/><rect x="151" y="1030" width="3" height="19"/></g>
<rect x="178" y="1025" width="29" height="31" rx="2" fill="#5a90c2"/>
<use href="#tl" x="183" y="1030"/><use href="#tl" x="213" y="1030"/><use href="#tl" x="243" y="1030"/><use href="#tl" x="273" y="1030"/>
<path d="M184 1063h110M193 1056v7M222 1056v7M252 1056v7M282 1056v7" stroke="#666" stroke-width="2"/>
<path d="M290 1023h15v7l-5 5h-5l-5-5z" fill="#666"/><path d="M297.500 1034v30" stroke="#666" stroke-width="2.400"/>
<circle cx="1898" cy="1041" r="5.500" fill="none" stroke="#666" stroke-width="3"/><circle cx="1898" cy="1041" r="8.500" fill="none" stroke="#666" stroke-width="2.600" stroke-dasharray="3 3.700"/>
</svg>
</body></html>
